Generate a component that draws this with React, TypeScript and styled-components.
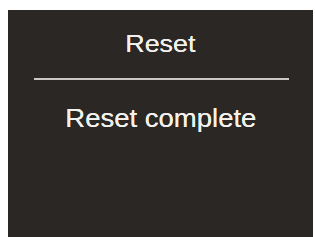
import React from "react";
import styled, { createGlobalStyle } from "styled-components";

const GlobalStyle = createGlobalStyle`
  html, body {
    margin: 0;
    padding: 0;
    background: #ffffff;
    overflow: hidden;
  }
  body {
    font-family: "Liberation Sans", Arial, sans-serif;
  }
`;

const Screen = styled.div`
  margin: 10px 2px 0 8px;
  height: 227px;
  background: #2a2725;
  display: flex;
  flex-direction: column;
  align-items: center;
  padding-top: 20px;
  box-sizing: border-box;
`;

// the panel text is a bit wider than plain Arial, so stretch it
const Title = styled.div<{ $size: number; $stretch: number }>`
  color: #f2f1ee;
  font-size: ${({ $size }) => $size}px;
  line-height: ${({ $size }) => $size + 4}px;
  text-align: center;
  transform: scaleX(${({ $stretch }) => $stretch});
  text-shadow: 0 0 0.4px #f2f1ee;
`;

const Divider = styled.div`
  align-self: stretch;
  height: 2px;
  margin: 20px 24px 24px 26px;
  background: #c9c8c6;
`;

export default function App() {
  return (
    <>
      <GlobalStyle />
      <Screen>
        <Title $size={24} $stretch={1.12}>Reset</Title>
        <Divider />
        <Title $size={25} $stretch={1.1}>Reset complete</Title>
      </Screen>
    </>
  );
}
